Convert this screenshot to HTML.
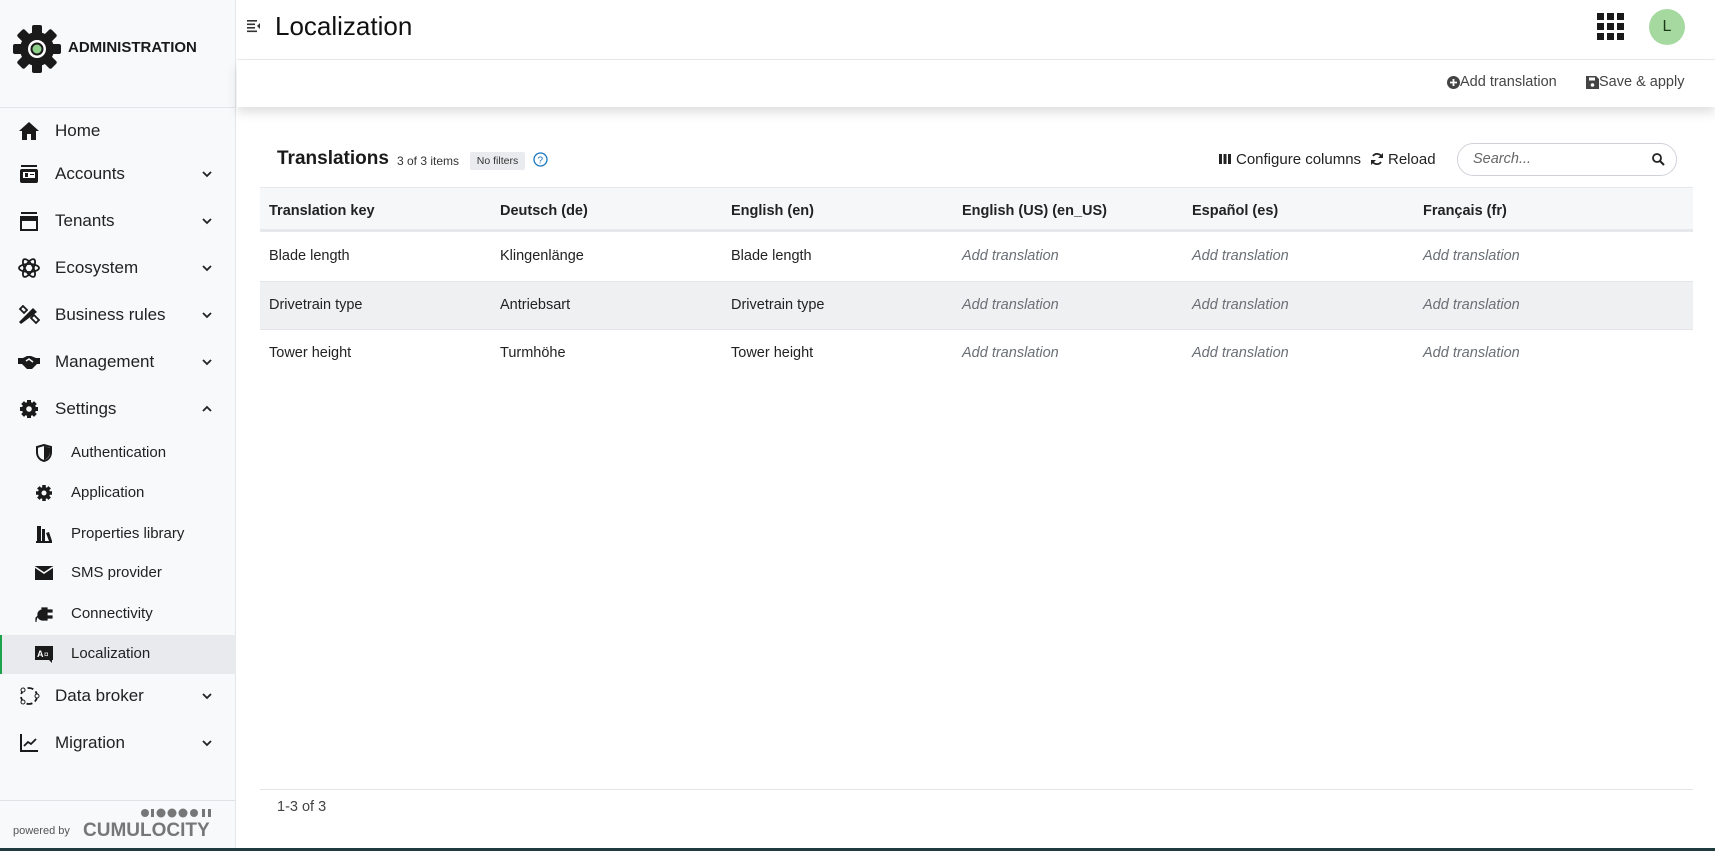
<!DOCTYPE html>
<html><head><meta charset="utf-8"><style>
*{box-sizing:border-box;margin:0;padding:0}
body{width:1715px;height:851px;overflow:hidden;background:#fff;font-family:"Liberation Sans",sans-serif;color:#1c1c1c;position:relative}
.a{position:absolute;white-space:nowrap}
#side{position:absolute;left:0;top:0;width:236px;height:851px;background:#f8f9fb;border-right:1px solid #e4e6ea}
.nav{position:absolute;left:0;width:236px;font-size:17px;color:#222;line-height:20px}
.nav .t{position:absolute;left:55px;top:0}
.nav .i{position:absolute;left:18px;top:0;width:22px;height:20px}
.nav .c{position:absolute;left:202px;top:6px;width:10px;height:8px}
.sub{position:absolute;left:0;width:236px;font-size:15px;color:#222;line-height:18px}
.sub .t{position:absolute;left:71px;top:0}
.sub .i{position:absolute;left:34px;top:0;width:20px;height:18px}
.th{position:absolute;top:203px;font-size:14.5px;font-weight:bold;color:#222}
.td{position:absolute;font-size:14.5px;color:#222}
.em{font-style:italic;color:#6b6f76}
</style></head><body>
<div id="side">
 <svg class="a" style="left:12px;top:24px" width="50" height="50" viewBox="0 0 50 50"><g fill="#1a1a1a"><circle cx="25" cy="25" r="17"/><g><rect x="20" y="1" width="10" height="10" rx="2"/><rect x="20" y="39" width="10" height="10" rx="2"/><rect x="1" y="20" width="10" height="10" rx="2"/><rect x="39" y="20" width="10" height="10" rx="2"/></g><g transform="rotate(45 25 25)"><rect x="20" y="1" width="10" height="10" rx="2"/><rect x="20" y="39" width="10" height="10" rx="2"/><rect x="1" y="20" width="10" height="10" rx="2"/><rect x="39" y="20" width="10" height="10" rx="2"/></g></g><circle cx="25" cy="25" r="9" fill="#fff"/><circle cx="25" cy="25" r="6.5" fill="#1a1a1a"/><circle cx="25" cy="25" r="4.5" fill="#8fd18a"/></svg>
 <div class="a" style="left:68px;top:39px;font-size:15px;font-weight:bold;color:#1a1a1a">ADMINISTRATION</div>
 <div class="a" style="left:0;top:107px;width:236px;border-top:1px solid #e2e4e8"></div>

 <div class="nav" style="top:121px"><svg class="i" viewBox="0 0 22 20"><path d="M11 1 1 10h3v9h5v-6h4v6h5v-9h3z" fill="#1a1a1a"/></svg><span class="t">Home</span></div>
 <div class="nav" style="top:164px"><svg class="i" viewBox="0 0 22 20"><rect x="3" y="1" width="16" height="2" fill="#1a1a1a"/><rect x="2" y="5" width="18" height="14" rx="2" fill="#1a1a1a"/><rect x="5" y="8" width="12" height="6" fill="#fff"/><rect x="7" y="9" width="3" height="4" fill="#1a1a1a"/><rect x="12" y="10" width="4" height="1" fill="#1a1a1a"/></svg><span class="t">Accounts</span><svg class="c" viewBox="0 0 10 8"><path d="M1 2l4 4 4-4" stroke="#222" stroke-width="1.8" fill="none"/></svg></div>
 <div class="nav" style="top:211px"><svg class="i" viewBox="0 0 22 20"><rect x="3" y="1" width="16" height="2" fill="#1a1a1a"/><rect x="2" y="5" width="18" height="3" fill="#1a1a1a"/><rect x="3" y="9" width="16" height="10" fill="none" stroke="#1a1a1a" stroke-width="2"/></svg><span class="t">Tenants</span><svg class="c" viewBox="0 0 10 8"><path d="M1 2l4 4 4-4" stroke="#222" stroke-width="1.8" fill="none"/></svg></div>
 <div class="nav" style="top:258px"><svg class="i" viewBox="0 0 22 20"><g fill="none" stroke="#1a1a1a" stroke-width="1.8"><ellipse cx="11" cy="10" rx="10" ry="4"/><ellipse cx="11" cy="10" rx="10" ry="4" transform="rotate(60 11 10)"/><ellipse cx="11" cy="10" rx="10" ry="4" transform="rotate(-60 11 10)"/></g></svg><span class="t">Ecosystem</span><svg class="c" viewBox="0 0 10 8"><path d="M1 2l4 4 4-4" stroke="#222" stroke-width="1.8" fill="none"/></svg></div>
 <div class="nav" style="top:305px"><svg class="i" viewBox="0 0 22 20"><path d="M3 19 1 17 15 3l4 4z" fill="#1a1a1a"/><path d="M2 4l3-3 4 4-3 3zM13 13l3-3 5 5-3 3z" fill="none" stroke="#1a1a1a" stroke-width="1.8"/></svg><span class="t">Business rules</span><svg class="c" viewBox="0 0 10 8"><path d="M1 2l4 4 4-4" stroke="#222" stroke-width="1.8" fill="none"/></svg></div>
 <div class="nav" style="top:352px"><svg class="i" viewBox="0 0 22 20"><path d="M0 6h5l4-2h4l5 2h4v6h-3l-5 5H9L4 12H0z" fill="#1a1a1a"/><path d="M8 9l3-2 4 3" stroke="#f8f9fb" stroke-width="1.5" fill="none"/></svg><span class="t">Management</span><svg class="c" viewBox="0 0 10 8"><path d="M1 2l4 4 4-4" stroke="#222" stroke-width="1.8" fill="none"/></svg></div>
 <div class="nav" style="top:399px"><svg class="i" viewBox="0 0 22 20"><circle cx="11" cy="10" r="7" fill="#1a1a1a"/><g stroke="#1a1a1a" stroke-width="4"><path d="M11 1v18M2 10h18M4.6 3.6l12.8 12.8M17.4 3.6 4.6 16.4"/></g><circle cx="11" cy="10" r="2.8" fill="#f8f9fb"/></svg><span class="t">Settings</span><svg class="c" viewBox="0 0 10 8"><path d="M1 6l4-4 4 4" stroke="#222" stroke-width="1.8" fill="none"/></svg></div>

 <div class="sub" style="top:444px"><svg class="i" viewBox="0 0 20 18"><path d="M10 1 3 3v5c0 5 3 8 7 9 4-1 7-4 7-9V3z" fill="none" stroke="#1a1a1a" stroke-width="2"/><path d="M10 2v14c3-1 6-4 6-8V4z" fill="#1a1a1a"/></svg><span class="t">Authentication</span></div>
 <div class="sub" style="top:484px"><svg class="i" viewBox="0 0 20 18"><circle cx="10" cy="9" r="6" fill="#1a1a1a"/><g stroke="#1a1a1a" stroke-width="3.5"><path d="M10 1v16M2 9h16M4.3 3.3l11.4 11.4M15.7 3.3 4.3 14.7"/></g><circle cx="10" cy="9" r="2.5" fill="#f8f9fb"/></svg><span class="t">Application</span></div>
 <div class="sub" style="top:525px"><svg class="i" viewBox="0 0 20 18"><path d="M2 16h16v2H2zM3 1h4v15H3zM8 4h3v12H8zM12 8l3-1 3 9h-3z" fill="#1a1a1a"/></svg><span class="t">Properties library</span></div>
 <div class="sub" style="top:564px"><svg class="i" viewBox="0 0 20 18"><rect x="1" y="2" width="18" height="14" fill="#1a1a1a"/><path d="M1 3l9 6 9-6" stroke="#f8f9fb" stroke-width="1.6" fill="none"/></svg><span class="t">SMS provider</span></div>
 <div class="sub" style="top:605px"><svg class="i" viewBox="0 0 20 18"><path d="M8 3h5v12H8c-2 0-4-2-4-4v-2c0-2 2-4 4-4zM13 5h5v2h-5zM13 11h5v2h-5zM4 11 2 13v4" fill="#1a1a1a" stroke="#1a1a1a" stroke-width="1.2"/></svg><span class="t">Connectivity</span></div>
 <div class="a" style="left:0;top:635px;width:236px;height:39px;background:#e8eaed;border-left:2px solid #1aa34a"></div>
 <div class="sub" style="top:645px"><svg class="i" viewBox="0 0 20 18"><path d="M1 1h18v14h-1v3l-3-3H1z" fill="#1a1a1a"/><text x="3" y="12" font-size="9" font-weight="bold" fill="#fff" font-family="Liberation Sans">A</text><text x="10" y="12" font-size="8" fill="#fff" font-family="Liberation Sans">¤</text></svg><span class="t">Localization</span></div>

 <div class="nav" style="top:686px"><svg class="i" viewBox="0 0 22 20"><circle cx="11" cy="10" r="8" fill="none" stroke="#1a1a1a" stroke-width="1.8" stroke-dasharray="6 3"/><circle cx="5" cy="4" r="2" fill="#fff" stroke="#1a1a1a"/><circle cx="19" cy="10" r="2" fill="#fff" stroke="#1a1a1a"/><circle cx="5" cy="16" r="2" fill="#fff" stroke="#1a1a1a"/></svg><span class="t">Data broker</span><svg class="c" viewBox="0 0 10 8"><path d="M1 2l4 4 4-4" stroke="#222" stroke-width="1.8" fill="none"/></svg></div>
 <div class="nav" style="top:733px"><svg class="i" viewBox="0 0 22 20"><path d="M3 1v17h17" stroke="#1a1a1a" stroke-width="2" fill="none"/><path d="M6 13l4-4 3 2 5-5" stroke="#1a1a1a" stroke-width="1.8" fill="none"/></svg><span class="t">Migration</span><svg class="c" viewBox="0 0 10 8"><path d="M1 2l4 4 4-4" stroke="#222" stroke-width="1.8" fill="none"/></svg></div>

 <div class="a" style="left:0;top:800px;width:236px;border-top:1px solid #dfe1e5"></div>
 <div class="a" style="left:13px;top:825px;font-size:11px;color:#555">powered by</div>
 <svg class="a" style="left:140px;top:808px" width="78" height="10"><g fill="#777"><circle cx="5" cy="5" r="4"/><rect x="11" y="1" width="3" height="8"/><circle cx="21" cy="5" r="4.5"/><circle cx="32" cy="5" r="4.5"/><circle cx="43" cy="5" r="4.5"/><circle cx="54" cy="5" r="4"/><rect x="62" y="1" width="3" height="8"/><rect x="68" y="1" width="3" height="8"/></g></svg>
 <div class="a" style="left:83px;top:820px;font-size:19px;font-weight:bold;color:#777">CUMULOCITY</div>
</div>

<svg class="a" style="left:247px;top:19px" width="14" height="14" viewBox="0 0 14 14"><g fill="#333"><rect x="0" y="1" width="10" height="1.6"/><rect x="0" y="4.5" width="8" height="1.6"/><rect x="0" y="8" width="8" height="1.6"/><rect x="0" y="11.5" width="10" height="1.6"/><path d="M13 4v6l-3-3z"/></g></svg>
<div class="a" style="left:275px;top:11px;font-size:26px;color:#111">Localization</div>
<svg class="a" style="left:1597px;top:13px" width="27" height="27"><g fill="#1a1a1a"><rect x="0" y="0" width="7" height="7"/><rect x="10" y="0" width="7" height="7"/><rect x="20" y="0" width="7" height="7"/><rect x="0" y="10" width="7" height="7"/><rect x="10" y="10" width="7" height="7"/><rect x="20" y="10" width="7" height="7"/><rect x="0" y="20" width="7" height="7"/><rect x="10" y="20" width="7" height="7"/><rect x="20" y="20" width="7" height="7"/></g></svg>
<div class="a" style="left:1649px;top:9px;width:36px;height:36px;border-radius:50%;background:#a6d9a0;text-align:center;line-height:36px;font-size:16px;color:#1a3a1a">L</div>
<div class="a" style="left:237px;top:59px;width:1478px;border-top:1px solid #e8eaed"></div>
<div class="a" style="left:237px;top:60px;width:1478px;height:47px;background:#fff;box-shadow:0 6px 10px rgba(0,0,0,.12)"></div>
<svg class="a" style="left:1447px;top:76px" width="13" height="13"><circle cx="6.5" cy="6.5" r="6.5" fill="#444"/><path d="M6.5 3v7M3 6.5h7" stroke="#fff" stroke-width="1.8"/></svg>
<div class="a" style="left:1460px;top:74px;font-size:14.5px;color:#444">Add translation</div>
<svg class="a" style="left:1586px;top:76px" width="13" height="13"><path d="M0 0h10l3 3v10H0z" fill="#444"/><rect x="3" y="1.5" width="6" height="3" fill="#fff"/><circle cx="6.5" cy="9" r="1.8" fill="#fff"/></svg>
<div class="a" style="left:1599px;top:74px;font-size:14.5px;color:#444">Save &amp; apply</div>

<div class="a" style="left:277px;top:148px;font-size:19px;font-weight:bold;color:#1a1a1a">Translations</div>
<div class="a" style="left:397px;top:154px;font-size:12px;color:#333">3 of 3 items</div>
<div class="a" style="left:470px;top:152px;width:55px;height:18px;background:#e9ebee;border-radius:2px;font-size:10.5px;line-height:18px;text-align:center;color:#333">No filters</div>
<svg class="a" style="left:533px;top:152px" width="15" height="15"><circle cx="7.5" cy="7.5" r="6.5" fill="none" stroke="#1776bf" stroke-width="1.3"/><text x="4.5" y="11.5" font-size="10" fill="#1776bf" font-family="Liberation Sans">?</text></svg>
<svg class="a" style="left:1219px;top:154px" width="12" height="10"><g fill="#222"><rect x="0" y="0" width="3" height="10"/><rect x="4.5" y="0" width="3" height="10"/><rect x="9" y="0" width="3" height="10"/></g></svg>
<div class="a" style="left:1236px;top:151px;font-size:15px;color:#222">Configure columns</div>
<svg class="a" style="left:1370px;top:152px" width="14" height="14"><path d="M12 6A5 5 0 0 0 3 4M2 8a5 5 0 0 0 9 2" stroke="#222" stroke-width="1.8" fill="none"/><path d="M13 1v5H8zM1 13V8h5z" fill="#222"/></svg>
<div class="a" style="left:1388px;top:151px;font-size:15px;color:#222">Reload</div>
<div class="a" style="left:1457px;top:143px;width:220px;height:33px;border:1px solid #cfd3d8;border-radius:17px"></div>
<div class="a" style="left:1473px;top:151px;font-size:14.5px;font-style:italic;color:#666">Search...</div>
<svg class="a" style="left:1652px;top:153px" width="13" height="13"><circle cx="5" cy="5" r="4" stroke="#222" stroke-width="1.8" fill="none"/><path d="M8 8l4 4" stroke="#222" stroke-width="2"/></svg>

<div class="a" style="left:260px;top:187px;width:1433px;height:45px;background:#f6f7f9;border-top:1px solid #e6e8eb;border-bottom:3px solid #e6e8eb"></div>
<div class="th" style="left:269px">Translation key</div>
<div class="th" style="left:500px">Deutsch (de)</div>
<div class="th" style="left:731px">English (en)</div>
<div class="th" style="left:962px">English (US) (en_US)</div>
<div class="th" style="left:1192px">Español (es)</div>
<div class="th" style="left:1423px">Français (fr)</div>

<div class="a" style="left:260px;top:281px;width:1433px;height:49px;background:#eff0f2;border-top:1px solid #e3e5e8;border-bottom:1px solid #e3e5e8"></div>

<div class="td" style="left:269px;top:248px">Blade length</div>
<div class="td" style="left:500px;top:248px">Klingenlänge</div>
<div class="td" style="left:731px;top:248px">Blade length</div>
<div class="td em" style="left:962px;top:248px">Add translation</div>
<div class="td em" style="left:1192px;top:248px">Add translation</div>
<div class="td em" style="left:1423px;top:248px">Add translation</div>

<div class="td" style="left:269px;top:297px">Drivetrain type</div>
<div class="td" style="left:500px;top:297px">Antriebsart</div>
<div class="td" style="left:731px;top:297px">Drivetrain type</div>
<div class="td em" style="left:962px;top:297px">Add translation</div>
<div class="td em" style="left:1192px;top:297px">Add translation</div>
<div class="td em" style="left:1423px;top:297px">Add translation</div>

<div class="td" style="left:269px;top:345px">Tower height</div>
<div class="td" style="left:500px;top:345px">Turmhöhe</div>
<div class="td" style="left:731px;top:345px">Tower height</div>
<div class="td em" style="left:962px;top:345px">Add translation</div>
<div class="td em" style="left:1192px;top:345px">Add translation</div>
<div class="td em" style="left:1423px;top:345px">Add translation</div>

<div class="a" style="left:260px;top:789px;width:1433px;border-top:1px solid #e3e5e8"></div>
<div class="a" style="left:277px;top:799px;font-size:14.5px;color:#444">1-3 of 3</div>

<div class="a" style="left:0;top:848px;width:1715px;height:3px;background:#1f3b40"></div>
</body></html>
